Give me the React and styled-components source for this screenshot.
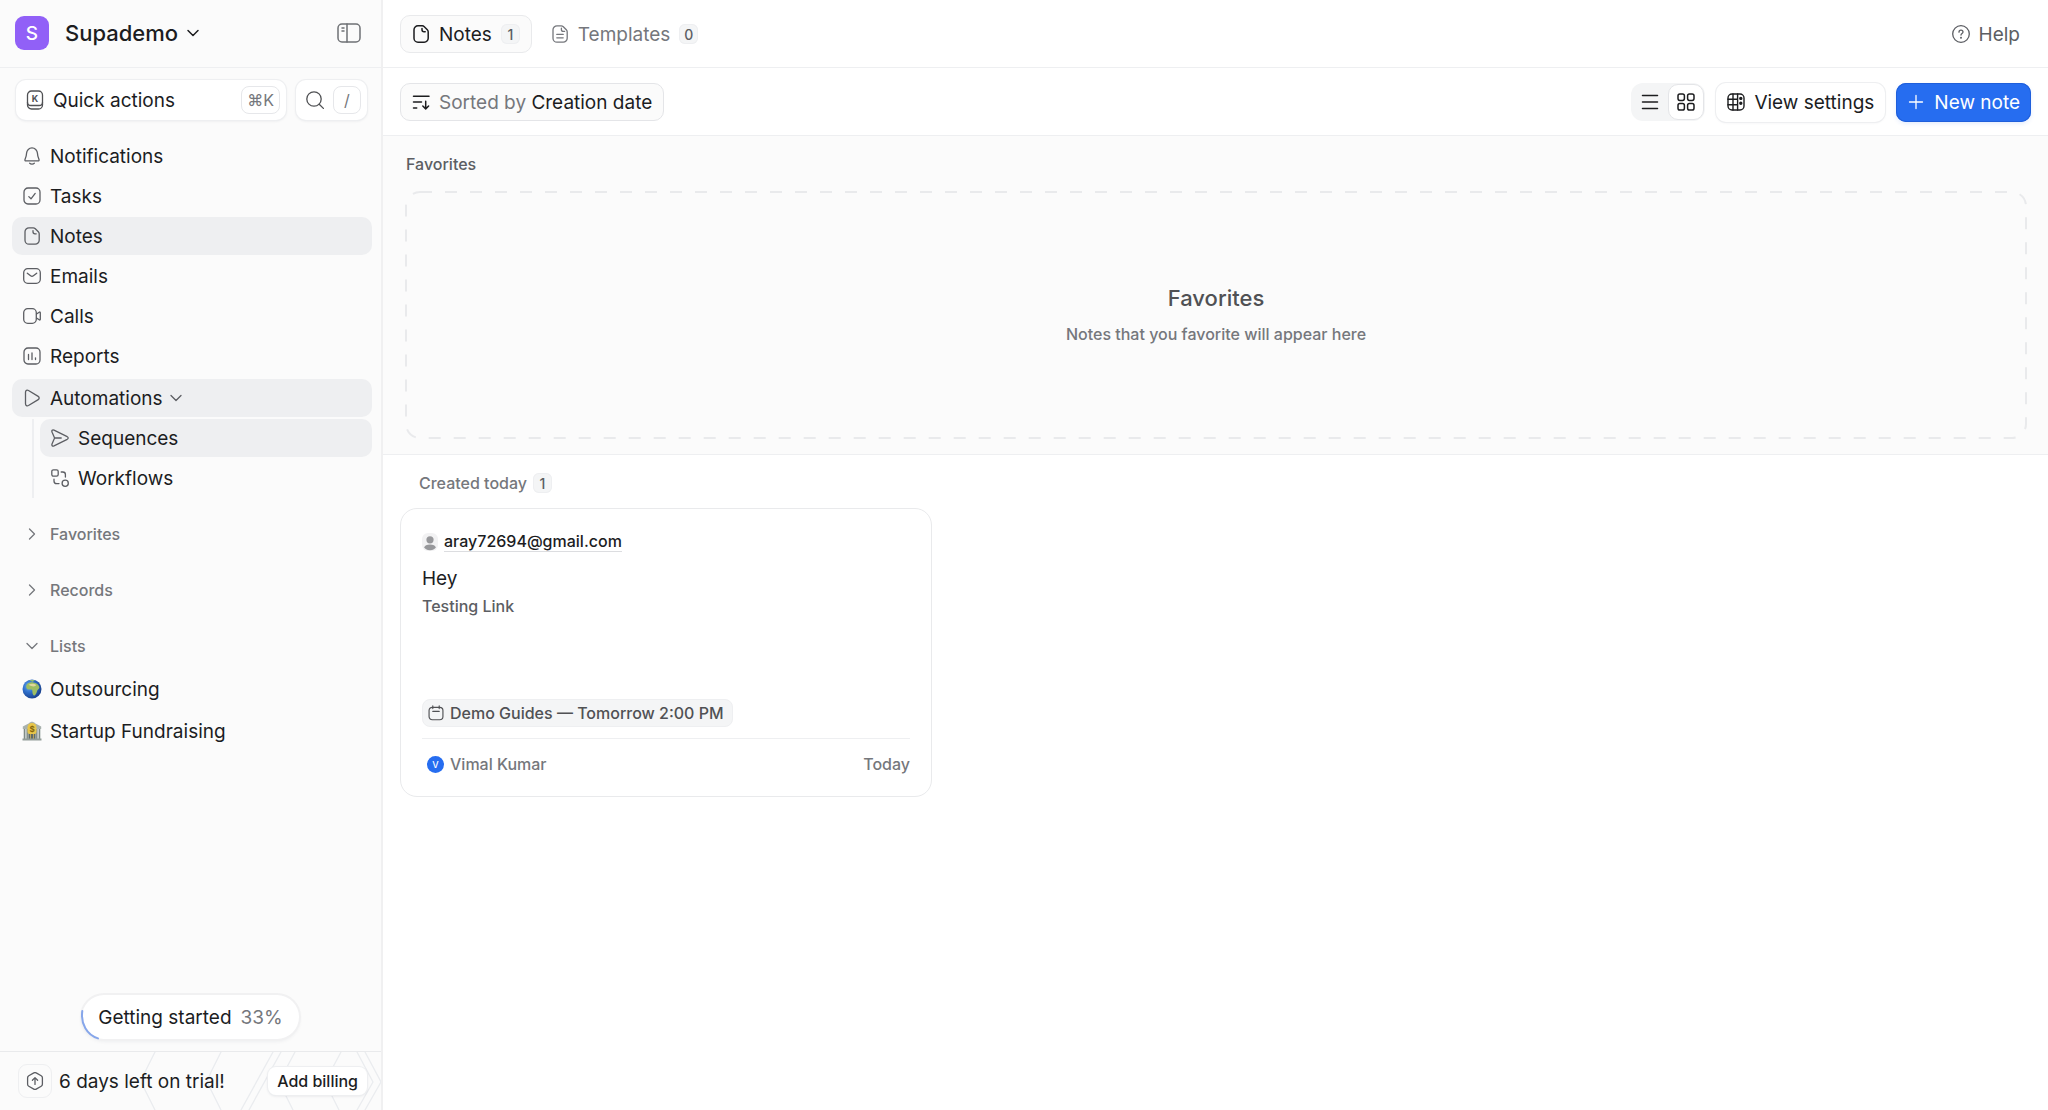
import React from "react";
import styled, { createGlobalStyle } from "styled-components";

const GlobalStyle = createGlobalStyle`
  * {
    box-sizing: border-box;
  }
  body {
    margin: 0;
    background: #ffffff;
    color: #1c1d1f;
    font-family: Inter, "Liberation Sans", sans-serif;
    font-size: 19px;
    font-weight: 400;
    -webkit-font-smoothing: antialiased;
  }
  button {
    font: inherit;
    color: inherit;
    cursor: pointer;
  }
  h1, h2, h3, p, ul {
    margin: 0;
    padding: 0;
  }
  ul {
    list-style: none;
  }
  a {
    color: inherit;
    text-decoration: none;
  }
`;

const Svg = styled.svg`
  flex: none;
  display: block;
  fill: none;
  stroke: currentColor;
  stroke-width: ${(props) => props.$stroke || 1.3};
  stroke-linecap: round;
  stroke-linejoin: round;
`;

const notePath =
  "M6 .8h4.2c.8 0 1.5.3 2.1.9l3 3c.6.6.9 1.3.9 2.1v6.4a4 4 0 0 1-4 4H6a4 4 0 0 1-4-4V4.8a4 4 0 0 1 4-4z";

const shapes = {
  bell: (
    <>
      <path d="M9 .9a5.4 5.4 0 0 0-5.4 5.2C3.5 9 2.9 10.5 2 12.6c-.3.7.1 1.3.9 1.3h12.2c.8 0 1.2-.6.9-1.3-.9-2.1-1.5-3.6-1.6-6.5A5.4 5.4 0 0 0 9 .9z" />
      <path d="M6.6 16.2c.6.7 1.4 1 2.4 1s1.8-.3 2.4-1" />
    </>
  ),
  tasks: (
    <>
      <rect x="1" y="1" width="16" height="16" rx="4" />
      <path d="M5.8 9.6 8 11.8l4.2-5.4" />
    </>
  ),
  note: (
    <>
      <path d={notePath} />
      <path d="M10 3.6v1.2c0 1.3.7 2 2 2h1.2" />
    </>
  ),
  template: (
    <>
      <path d={notePath} />
      <path d="M10.4 3.2v1.2c0 1.3.7 2 2 2h1.2M5.8 9.4h6.4M5.8 12.8h6.4" />
    </>
  ),
  mail: (
    <>
      <rect x=".7" y="1.7" width="16.6" height="14.6" rx="4" />
      <path d="m4.3 6.2 3.3 2.6c.9.7 1.9.7 2.8 0l3.3-2.6" />
    </>
  ),
  call: (
    <>
      <rect x=".7" y="1.7" width="12.6" height="14.6" rx="4" />
      <path d="m13.5 7 2.7-1.8c.6-.4 1.1-.1 1.1.5v6.6c0 .6-.5.9-1.1.5L13.5 11" />
    </>
  ),
  report: (
    <>
      <rect x="1" y="1" width="16" height="16" rx="4" />
      <path d="M5.5 7.5v5M9 6v6.5M12.5 10.8v1.7" />
    </>
  ),
  play: (
    <path d="M2.5 3.2c0-1.7 1.5-2.5 3-1.7l9.7 5.9c1.3.8 1.3 2.4 0 3.2l-9.7 5.9c-1.5.8-3 0-3-1.7z" />
  ),
  send: (
    <path d="M1.1 3.3C.4 1.5 1.4.5 3 1.2l13.2 6.5c1.3.7 1.3 1.9 0 2.6L3 16.8c-1.6.7-2.6-.3-1.9-2.1L3.6 9zM3.6 9h6.6" />
  ),
  workflow: (
    <>
      <rect x=".8" y=".8" width="6.4" height="6.4" rx="1.6" />
      <circle cx="14.2" cy="14.2" r="3.1" />
      <path d="M10.2 3h1.6c1.6 0 2.6 1 2.6 2.6V8M3 10.2v1.7c0 1.7 1 2.7 2.7 2.7H8" />
    </>
  ),
  search: (
    <>
      <circle cx="8" cy="8" r="7.2" />
      <path d="m13.2 13.2 4.2 4.2" />
    </>
  ),
  down: <path d="m4 6.5 5 5 5-5" />,
  right: <path d="m6.5 4 5 5-5 5" />,
  sort: <path d="M1.5 3.2H17M1.5 9h8M1.5 15h3.2M13.7 8.2v7.6M10.8 13l2.9 2.9 2.9-2.9" />,
  list: <path d="M1.5 2.5h15M1.5 9h15M1.5 15.5h15" />,
  grid: (
    <>
      <rect x="1" y="1" width="6.4" height="6.4" rx="1.8" />
      <rect x="10.6" y="1" width="6.4" height="6.4" rx="1.8" />
      <rect x="1" y="10.6" width="6.4" height="6.4" rx="1.8" />
      <rect x="10.6" y="10.6" width="6.4" height="6.4" rx="1.8" />
    </>
  ),
  settings: (
    <>
      <rect x="1" y="1" width="16" height="16" rx="4" />
      <path d="M6 1v16M10.6 1v16M1 6.2h9.6M1 11.8h9.6" />
      <circle cx="13.8" cy="5.4" r="1" fill="currentColor" />
      <circle cx="13.8" cy="10.2" r="1" fill="currentColor" />
    </>
  ),
  plus: <path d="M9 2.5v13M2.5 9h13" />,
  help: (
    <>
      <circle cx="9" cy="9" r="8.3" />
      <path d="M7 7.2C7 6 7.9 5.2 9 5.2s2 .8 2 1.9c0 1.5-2 1.5-2 3" />
      <circle cx="9" cy="12.7" r=".4" fill="currentColor" />
    </>
  ),
  calendar: (
    <>
      <rect x="1.2" y="2.6" width="15.6" height="14" rx="3.6" />
      <path d="M5.4 1v3M12.6 1v3M5.4 7.2h7.2" />
    </>
  ),
  upgrade: (
    <>
      <path d="M7.8.9a2.4 2.4 0 0 1 2.4 0l5 2.9a2.4 2.4 0 0 1 1.2 2.1v6.2a2.4 2.4 0 0 1-1.2 2.1l-5 2.9a2.4 2.4 0 0 1-2.4 0l-5-2.9a2.4 2.4 0 0 1-1.2-2.1V5.9a2.4 2.4 0 0 1 1.2-2.1z" />
      <path d="M9 12.4V6M6.4 8.2 9 5.6l2.6 2.6" />
    </>
  ),
};

const Icon = ({ name, size = 18, stroke }) => (
  <Svg width={size} height={size} viewBox="0 0 18 18" $stroke={stroke} aria-hidden="true">
    {shapes[name]}
  </Svg>
);

const PanelIcon = () => (
  <Svg width="24" height="20" viewBox="0 0 24 20" $stroke={1.5} aria-hidden="true">
    <rect x="1" y="1" width="22" height="18" rx="4" />
    <path d="M10 1v18M5 5h2M5 8h2" />
  </Svg>
);

const KeyIcon = () => (
  <Svg width="18" height="20" viewBox="0 0 18 20" aria-hidden="true">
    <rect x="1.5" y="1" width="15" height="18" rx="4" />
    <path d="M1.5 12.5c0 2 1.2 3 3.5 3h8c2.3 0 3.5-1 3.5-3" />
    <text x="9" y="11.5" fontSize="9" fontWeight="700" textAnchor="middle" fill="currentColor" stroke="none">
      K
    </text>
  </Svg>
);

const GlobeIcon = () => (
  <svg width="20" height="20" viewBox="0 0 20 20" aria-hidden="true">
    <defs>
      <radialGradient id="sea" cx="35%" cy="35%" r="65%">
        <stop offset="0" stopColor="#6fb0ee" />
        <stop offset="50%" stopColor="#2f6fcb" />
        <stop offset="100%" stopColor="#1b4592" />
      </radialGradient>
    </defs>
    <circle cx="10" cy="10" r="9.5" fill="url(#sea)" />
    <path
      d="M5 5.2C6.5 3.8 9 3.2 11 3.4c2 .1 4.2.9 5.3 2.6.6 1 1.4 2 1 2.9-.5 1.3-1.8 1.6-2.2 3-.3 1.5-1.3 3.9-2.6 4.5-1.2.4-1.8-1-2-2.3-.2-1.4.2-2.4-.6-3.3-1-.9-3.6.3-4.9-1.1C3.8 8.4 4 6.2 5 5.2z"
      fill="#9dbd62"
    />
    <path d="M6.6 5.8c2-1.5 5.6-1.4 7.6.2-.6 1.8-4.2 2-7.6-.2z" fill="#e0d79c" />
    <path d="M7 1.6c1.8-.8 4-.9 6-.1l-2.3 1.2z" fill="#9dc46c" />
  </svg>
);

const BankIcon = () => (
  <svg width="20" height="20" viewBox="0 0 20 20" aria-hidden="true">
    <path d="M.8 5.5 7 2.2C8.5.2 11.5.2 13 2.2l6.2 3.3V8H.8z" fill="#a9b2ae" />
    <path d="M1.5 8h17v10h-17z" fill="#c9cfcc" />
    <path d="M2.5 8v10M5.3 8v10M14.7 8v10M17.5 8v10" stroke="#7f8a86" strokeWidth="1.2" />
    <path d="M6.5 9h7v9h-7z" fill="#5f6a67" />
    <path d="M8.5 13v5M11.5 13v5" stroke="#b9a25a" strokeWidth="1" />
    <path d="M5.5 6.5a4.5 4.5 0 0 1 9 0V11a2 2 0 0 1-2 2h-5a2 2 0 0 1-2-2z" fill="#e8c649" />
    <text x="10" y="10.5" fontSize="8" fontWeight="700" textAnchor="middle" fill="#84640c">
      $
    </text>
    <path d="M.5 17.5h19v2H.5z" fill="#939d99" />
  </svg>
);

const PersonIcon = () => (
  <svg width="16" height="18" viewBox="0 0 16 18" aria-hidden="true">
    <rect width="16" height="18" rx="6" fill="#f2f2f3" />
    <circle cx="8" cy="6.8" r="3.6" fill="#97989b" />
    <ellipse cx="8" cy="14.3" rx="5.6" ry="2.9" fill="#97989b" />
  </svg>
);

const Page = styled.div`
  display: grid;
  grid-template-columns: 383px minmax(0, 1fr);
  min-height: 100vh;
`;

const Sidebar = styled.aside`
  display: flex;
  flex-direction: column;
  background: #fbfbfb;
  border-right: 2px solid #f0f0f1;
`;

const SidebarHeader = styled.header`
  display: flex;
  align-items: center;
  justify-content: space-between;
  height: 68px;
  padding: 0 20px 1px 15px;
  border-bottom: 1px solid #eeeff1;
`;

const Workspace = styled.button`
  display: flex;
  align-items: center;
  padding: 0;
  border: 0;
  background: none;
  font-size: 22px;
  font-weight: 550;
`;

const WorkspaceLogo = styled.span`
  display: grid;
  place-items: center;
  width: 34px;
  height: 34px;
  margin-right: 16px;
  border-radius: 9px;
  background: #9160f7;
  color: #ffffff;
  font-size: 19px;
  font-weight: 500;
`;

const WorkspaceName = styled.span`
  margin-right: 6px;
`;

const IconButton = styled.button`
  display: flex;
  padding: 0;
  border: 0;
  background: none;
  color: #6f7175;
`;

const Shortcuts = styled.div`
  display: flex;
  gap: 10px;
  padding: 12px 14px 0 16px;
`;

const Shortcut = styled.button`
  display: flex;
  align-items: center;
  gap: 9px;
  flex: ${(props) => (props.$grow ? 1 : "none")};
  height: 40px;
  padding: 0 6px 0 10px;
  border: 0;
  border-radius: 10px;
  background: #ffffff;
  box-shadow: 0 0 0 1px #eeeff1, 0 1px 3px rgba(28, 40, 64, 0.1);
`;

const ShortcutIcon = styled.span`
  color: #505154;
`;

const Key = styled.kbd`
  display: grid;
  place-items: center;
  min-width: 28px;
  height: 28px;
  padding: 0 5px;
  margin-left: auto;
  border: 1px solid #e6e7ea;
  border-radius: 8px;
  color: #75777c;
  font-family: Inter, "DejaVu Sans", sans-serif;
  font-size: 16px;
`;

const Nav = styled.nav`
  flex: 1;
  padding: 17px 9px 0 12px;
`;

const NavList = styled.ul`
  display: flex;
  flex-direction: column;
  gap: 2px;
`;

const NavLink = styled.a`
  display: flex;
  align-items: center;
  gap: 9px;
  height: 38px;
  padding: 0 11px;
  border-radius: 10px;
  background: ${(props) => (props.$active ? "#eeeff1" : "transparent")};

  svg {
    color: #5c5e63;
  }
`;

const AutomationGroup = styled.div`
  margin-top: 4px;
`;

const AutomationLabel = styled.span`
  display: flex;
  align-items: center;
  gap: 4px;
`;

const SubList = styled(NavList)`
  margin: 2px 0 0 20px;
  padding: 0 0 1px 6px;
  border-left: 2px solid #eeeff1;
`;

const Sections = styled.div`
  display: flex;
  flex-direction: column;
  gap: 28px;
  margin-top: 22px;
`;

const SectionToggle = styled.button`
  display: flex;
  align-items: center;
  gap: 9px;
  width: 100%;
  height: 28px;
  padding: 0 11px;
  border: 0;
  background: none;
  color: #75777c;
  font-size: 16px;
  font-weight: 500;
`;

const SectionList = styled(NavList)`
  gap: 4px;
  margin-top: 10px;

  ${NavLink} {
    gap: 8px;
    padding: 0 10px;
  }
`;

const SidebarBottom = styled.div`
  display: flex;
  flex-direction: column;
`;

const Progress = styled.button`
  position: relative;
  display: flex;
  align-self: center;
  align-items: center;
  gap: 9px;
  height: 44px;
  margin-bottom: 12px;
  padding: 0 16px;
  border: 0;
  border-radius: 22px;
  background: #ffffff;
  box-shadow: 0 0 0 2px #f1f1f2, 0 2px 4px rgba(28, 40, 64, 0.08);
`;

/* the finished part of the ring around the pill */
const ProgressArc = styled(Svg)`
  position: absolute;
  left: -1px;
  bottom: -1px;
  color: #86a6ea;
`;

const Trial = styled.div`
  position: relative;
  display: flex;
  align-items: center;
  height: 59px;
  padding: 0 14px 0 18px;
  border-top: 1px solid #e9eaec;
  overflow: hidden;
`;

const TrialPattern = styled(Svg)`
  position: absolute;
  top: 0;
  right: 0;
  color: #eaecef;
`;

const TrialIcon = styled.span`
  display: grid;
  place-items: center;
  width: 34px;
  height: 34px;
  margin-right: 7px;
  border: 1px solid #eeeff1;
  border-radius: 9px;
  color: #5c5e63;
`;

const TrialText = styled.p`
  position: relative;
  flex: 1;
`;

const Billing = styled.button`
  position: relative;
  height: 28px;
  padding: 0 9px;
  border: 0;
  border-radius: 8px;
  background: #ffffff;
  box-shadow: 0 0 0 1px #eeeff1, 0 1px 3px rgba(28, 40, 64, 0.12);
  font-size: 16px;
  font-weight: 500;
`;

const Main = styled.main`
  min-width: 0;
`;

const Bar = styled.div`
  display: flex;
  align-items: center;
  justify-content: space-between;
  height: 68px;
  padding: 1px 17px 0;
  border-bottom: 1px solid #eeeff1;
`;

const Group = styled.div`
  display: flex;
  align-items: center;
  gap: ${(props) => props.$gap}px;
`;

const Tab = styled.button`
  display: flex;
  align-items: center;
  gap: 9px;
  height: 38px;
  padding: 0 11px;
  border: 1px solid ${(props) => (props.$active ? "#e9eaec" : "transparent")};
  border-radius: 10px;
  background: ${(props) => (props.$active ? "#fbfbfb" : "none")};
  color: ${(props) => (props.$active ? "#1c1d1f" : "#75777c")};
`;

const Count = styled.span`
  display: grid;
  place-items: center;
  min-width: 19px;
  height: 20px;
  border-radius: 6px;
  background: #f4f5f6;
  box-shadow: inset 0 0 0 1px #eeeff1;
  color: #5c5e63;
  font-size: 14px;
  font-weight: 500;
`;

const Help = styled.a`
  display: flex;
  align-items: center;
  gap: 9px;
  padding-right: 11px;
  color: #5c5e63;
`;

const SortButton = styled(Tab)`
  border-color: #e4e5e8;
`;

const Muted = styled.span`
  color: #75777c;
`;

const ViewToggle = styled.div`
  display: flex;
  align-items: center;
  height: 38px;
  padding: 1px;
  border-radius: 12px;
  background: #f4f5f6;
`;

const ViewOption = styled.button`
  display: grid;
  place-items: center;
  width: 36px;
  height: 36px;
  padding: 0;
  border: ${(props) => (props.$active ? "1px solid #e4e5e8" : "0")};
  border-radius: 10px;
  background: ${(props) => (props.$active ? "#ffffff" : "none")};
`;

const Button = styled.button`
  display: flex;
  align-items: center;
  gap: 9px;
  height: 39px;
  padding: 0 11px;
  border: 0;
  border-radius: 10px;
  background: ${(props) => (props.$primary ? "#266df0" : "#ffffff")};
  color: ${(props) => (props.$primary ? "#ffffff" : "#1c1d1f")};
  box-shadow: ${(props) =>
    props.$primary
      ? "inset 0 0 0 1px #1f5fdb, 0 2px 4px rgba(38, 109, 240, 0.12)"
      : "0 0 0 1px #eeeff1, 0 1px 3px rgba(28, 40, 64, 0.06)"};
`;

const Favorites = styled.section`
  padding: 18px 22px 16px 23px;
  border-bottom: 1px solid #eeeff1;
  background: #fbfbfb;
`;

const FavoritesLabel = styled.h2`
  color: #5c5e63;
  font-size: 16px;
  font-weight: 500;
  line-height: 20px;
`;

const DropArea = styled.div`
  position: relative;
  display: flex;
  flex-direction: column;
  align-items: center;
  gap: 10px;
  margin-top: 18px;
  padding: 92px 20px;
`;

const Outline = styled.svg`
  position: absolute;
  inset: 0;
  width: 100%;
  height: 100%;
  overflow: visible;
`;

const DropTitle = styled.h3`
  color: #505154;
  font-size: 22px;
  font-weight: 550;
  line-height: 28px;
`;

const DropText = styled.p`
  color: #75777c;
  font-size: 16px;
  font-weight: 500;
  line-height: 24px;
`;

const Created = styled.section`
  padding: 18px 16px 0 17px;
`;

const CreatedTitle = styled.h2`
  display: flex;
  align-items: center;
  gap: 6px;
  height: 20px;
  margin-left: 19px;
  color: #75777c;
  font-size: 16px;
  font-weight: 500;
`;

const Cards = styled.div`
  display: grid;
  grid-template-columns: repeat(3, minmax(0, 1fr));
  gap: 18px;
  margin-top: 15px;
`;

const Card = styled.article`
  padding: 22px 21px 18px;
  border: 1px solid #e9eaec;
  border-radius: 17px;
  background: #ffffff;
  font-size: 16px;
  font-weight: 500;
`;

const CardFrom = styled.div`
  display: flex;
  align-items: center;
  gap: 6px;
  line-height: 20px;
`;

const Email = styled.a`
  border-bottom: 1px solid #dcdde0;
`;

const CardTitle = styled.h3`
  margin-top: 13px;
  font-size: 19px;
  font-weight: 400;
  line-height: 28px;
`;

const CardText = styled.p`
  margin-bottom: 80px;
  color: #5c5e63;
  line-height: 26px;
`;

const Meeting = styled.a`
  display: flex;
  align-items: center;
  gap: 6px;
  width: fit-content;
  height: 28px;
  padding: 0 8px 0 5px;
  border: 1px solid #eeeff1;
  border-radius: 8px;
  background: #f4f5f6;
  color: #505154;
`;

const CardFooter = styled.footer`
  display: flex;
  align-items: center;
  justify-content: space-between;
  margin-top: 11px;
  padding-top: 11px;
  border-top: 1px solid #eeeff1;
  color: #75777c;
  line-height: 28px;
`;

const Author = styled.span`
  display: flex;
  align-items: center;
  gap: 6px;
  padding-left: 5px;
`;

const AuthorBadge = styled.span`
  display: grid;
  place-items: center;
  width: 17px;
  height: 17px;
  border-radius: 50%;
  background: #266df0;
  color: #ffffff;
  font-size: 9px;
  line-height: 17px;
`;

const mainLinks = [
  { icon: "bell", label: "Notifications" },
  { icon: "tasks", label: "Tasks" },
  { icon: "note", label: "Notes", active: true },
  { icon: "mail", label: "Emails" },
  { icon: "call", label: "Calls" },
  { icon: "report", label: "Reports" },
];

const SidebarNav = () => (
  <Nav>
    <NavList>
      {mainLinks.map((link) => (
        <li key={link.label}>
          <NavLink href="#" $active={link.active}>
            <Icon name={link.icon} />
            {link.label}
          </NavLink>
        </li>
      ))}
    </NavList>
    <AutomationGroup>
      <NavLink href="#" $active>
        <Icon name="play" />
        <AutomationLabel>
          Automations
          <Icon name="down" />
        </AutomationLabel>
      </NavLink>
      <SubList>
        <li>
          <NavLink href="#" $active>
            <Icon name="send" />
            Sequences
          </NavLink>
        </li>
        <li>
          <NavLink href="#">
            <Icon name="workflow" />
            Workflows
          </NavLink>
        </li>
      </SubList>
    </AutomationGroup>
    <Sections>
      <SectionToggle aria-expanded="false">
        <Icon name="right" />
        Favorites
      </SectionToggle>
      <SectionToggle aria-expanded="false">
        <Icon name="right" />
        Records
      </SectionToggle>
      <SectionToggle aria-expanded="true">
        <Icon name="down" />
        Lists
      </SectionToggle>
    </Sections>
    <SectionList>
      <li>
        <NavLink href="#">
          <GlobeIcon />
          Outsourcing
        </NavLink>
      </li>
      <li>
        <NavLink href="#">
          <BankIcon />
          Startup Fundraising
        </NavLink>
      </li>
    </SectionList>
  </Nav>
);

const NoteCard = () => (
  <Card>
    <CardFrom>
      <PersonIcon />
      <Email href="#">aray72694@gmail.com</Email>
    </CardFrom>
    <CardTitle>Hey</CardTitle>
    <CardText>Testing Link</CardText>
    <Meeting href="#">
      <Icon name="calendar" size={16} />
      Demo Guides — Tomorrow 2:00 PM
    </Meeting>
    <CardFooter>
      <Author>
        <AuthorBadge>V</AuthorBadge>
        Vimal Kumar
      </Author>
      <time>Today</time>
    </CardFooter>
  </Card>
);

const App = () => {
  return (
    <Page>
      <GlobalStyle />
      <Sidebar>
        <SidebarHeader>
          <Workspace>
            <WorkspaceLogo>S</WorkspaceLogo>
            <WorkspaceName>Supademo</WorkspaceName>
            <Icon name="down" stroke={1.5} />
          </Workspace>
          <IconButton aria-label="Collapse sidebar">
            <PanelIcon />
          </IconButton>
        </SidebarHeader>
        <Shortcuts>
          <Shortcut $grow>
            <ShortcutIcon>
              <KeyIcon />
            </ShortcutIcon>
            Quick actions
            <Key>⌘K</Key>
          </Shortcut>
          <Shortcut aria-label="Search">
            <ShortcutIcon>
              <Icon name="search" />
            </ShortcutIcon>
            <Key>/</Key>
          </Shortcut>
        </Shortcuts>
        <SidebarNav />
        <SidebarBottom>
          <Progress>
            <ProgressArc width="24" height="31" viewBox="0 0 24 31" $stroke={2}>
              <path d="M1.3 2C-.5 15 6 26 17 29.4" />
            </ProgressArc>
            Getting started
            <Muted>33%</Muted>
          </Progress>
          <Trial>
            <TrialPattern width="240" height="58" viewBox="0 0 240 58" aria-hidden="true">
              <path d="M14 0 4 20 0 30l14 28M80 0 70 20l-4 10 14 28M132 0l-32 58M140 0l-32 58M154 0l-16 30 14 28M200 0l-16 30 14 28M216 0l16 30-16 28M224 0l16 30-16 28" />
            </TrialPattern>
            <TrialIcon>
              <Icon name="upgrade" />
            </TrialIcon>
            <TrialText>6 days left on trial!</TrialText>
            <Billing>Add billing</Billing>
          </Trial>
        </SidebarBottom>
      </Sidebar>
      <Main>
        <Bar>
          <Group $gap={7}>
            <Tab $active>
              <Icon name="note" stroke={1.5} />
              Notes
              <Count>1</Count>
            </Tab>
            <Tab>
              <Icon name="template" />
              Templates
              <Count>0</Count>
            </Tab>
          </Group>
          <Help href="#">
            <Icon name="help" />
            Help
          </Help>
        </Bar>
        <Bar>
          <SortButton $active>
            <Icon name="sort" stroke={1.5} />
            <span>
              <Muted>Sorted by</Muted> Creation date
            </span>
          </SortButton>
          <Group $gap={11}>
            <ViewToggle>
              <ViewOption aria-label="List view">
                <Icon name="list" stroke={1.5} />
              </ViewOption>
              <ViewOption $active aria-label="Grid view">
                <Icon name="grid" stroke={1.5} />
              </ViewOption>
            </ViewToggle>
            <Button>
              <Icon name="settings" stroke={1.4} />
              View settings
            </Button>
            <Button $primary>
              <Icon name="plus" />
              New note
            </Button>
          </Group>
        </Bar>
        <Favorites>
          <FavoritesLabel>Favorites</FavoritesLabel>
          <DropArea>
            <Outline aria-hidden="true">
              <rect
                width="100%"
                height="100%"
                rx="14"
                fill="none"
                stroke="#e9eaec"
                strokeWidth="2"
                strokeDasharray="12 13"
              />
            </Outline>
            <DropTitle>Favorites</DropTitle>
            <DropText>Notes that you favorite will appear here</DropText>
          </DropArea>
        </Favorites>
        <Created>
          <CreatedTitle>
            Created today
            <Count>1</Count>
          </CreatedTitle>
          <Cards>
            <NoteCard />
          </Cards>
        </Created>
      </Main>
    </Page>
  );
};

export default App;
